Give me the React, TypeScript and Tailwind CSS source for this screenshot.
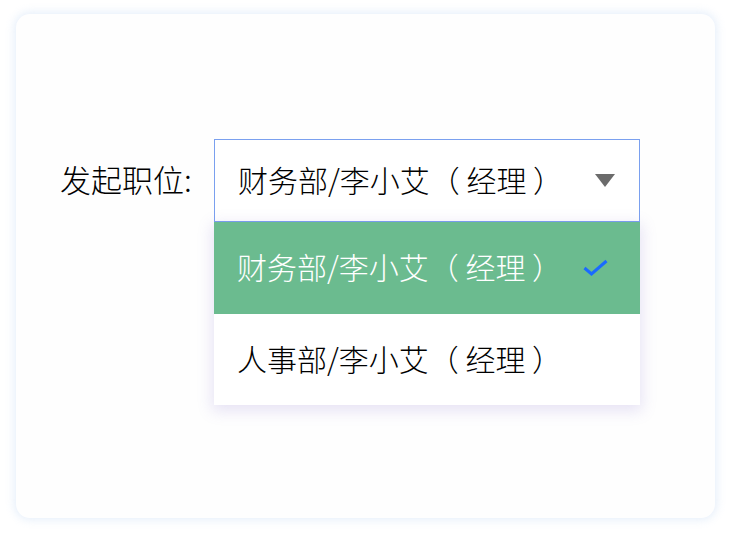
import React from "react";

export default function App() {
  return (
    <div
      className="w-[736px] h-[535px] bg-white pt-[14px] pl-[16px]"
      style={{ fontFamily: '"Noto Sans CJK SC", "Noto Sans", sans-serif' }}
    >
      <div className="w-[699px] h-[504px] rounded-[14px] bg-[#fefefe] shadow-[0_0_8px_2px_rgba(200,220,245,0.45)] pt-[125px] pl-[44px]">
        <div className="flex items-start">
          <div className="h-[83px] flex items-center pb-[4px] text-[31px] font-light text-black w-[154px] leading-none">
            发起职位:
          </div>
          <div className="relative w-[426px]">
            <div className="h-[83px] border border-[#7aa0ef] bg-white flex items-center pl-[23px] pr-[24px] pb-[4px] text-[30px] font-light text-black leading-none">
              <span className="flex-1 whitespace-pre">财务部/李小艾（ 经理 ）</span>
              <svg width="20" height="14" viewBox="0 0 20 14" className="mt-[4px]">
                <path d="M0 0 L20 0 L10 13 Z" fill="#6b6b6b" />
              </svg>
            </div>
            <div className="absolute left-0 top-[83px] w-[426px] bg-white shadow-[0_4px_14px_2px_rgba(120,100,200,0.18)]">
              <div className="h-[92px] bg-[#6bbb8f] flex items-center pl-[23px] pr-[32px] pb-[4px] text-[30px] font-light text-white leading-none">
                <span className="flex-1 whitespace-pre">财务部/李小艾（ 经理 ）</span>
                <svg width="25" height="20" viewBox="0 0 25 20" className="mt-[4px]">
                  <path d="M1.5 10 L8.5 16 L23.5 3" fill="none" stroke="#1a6aff" strokeWidth="3" />
                </svg>
              </div>
              <div className="h-[91px] flex items-center pl-[23px] pb-[4px] text-[30px] font-light text-black leading-none whitespace-pre">
                人事部/李小艾（ 经理 ）
              </div>
            </div>
          </div>
        </div>
      </div>
    </div>
  );
}
